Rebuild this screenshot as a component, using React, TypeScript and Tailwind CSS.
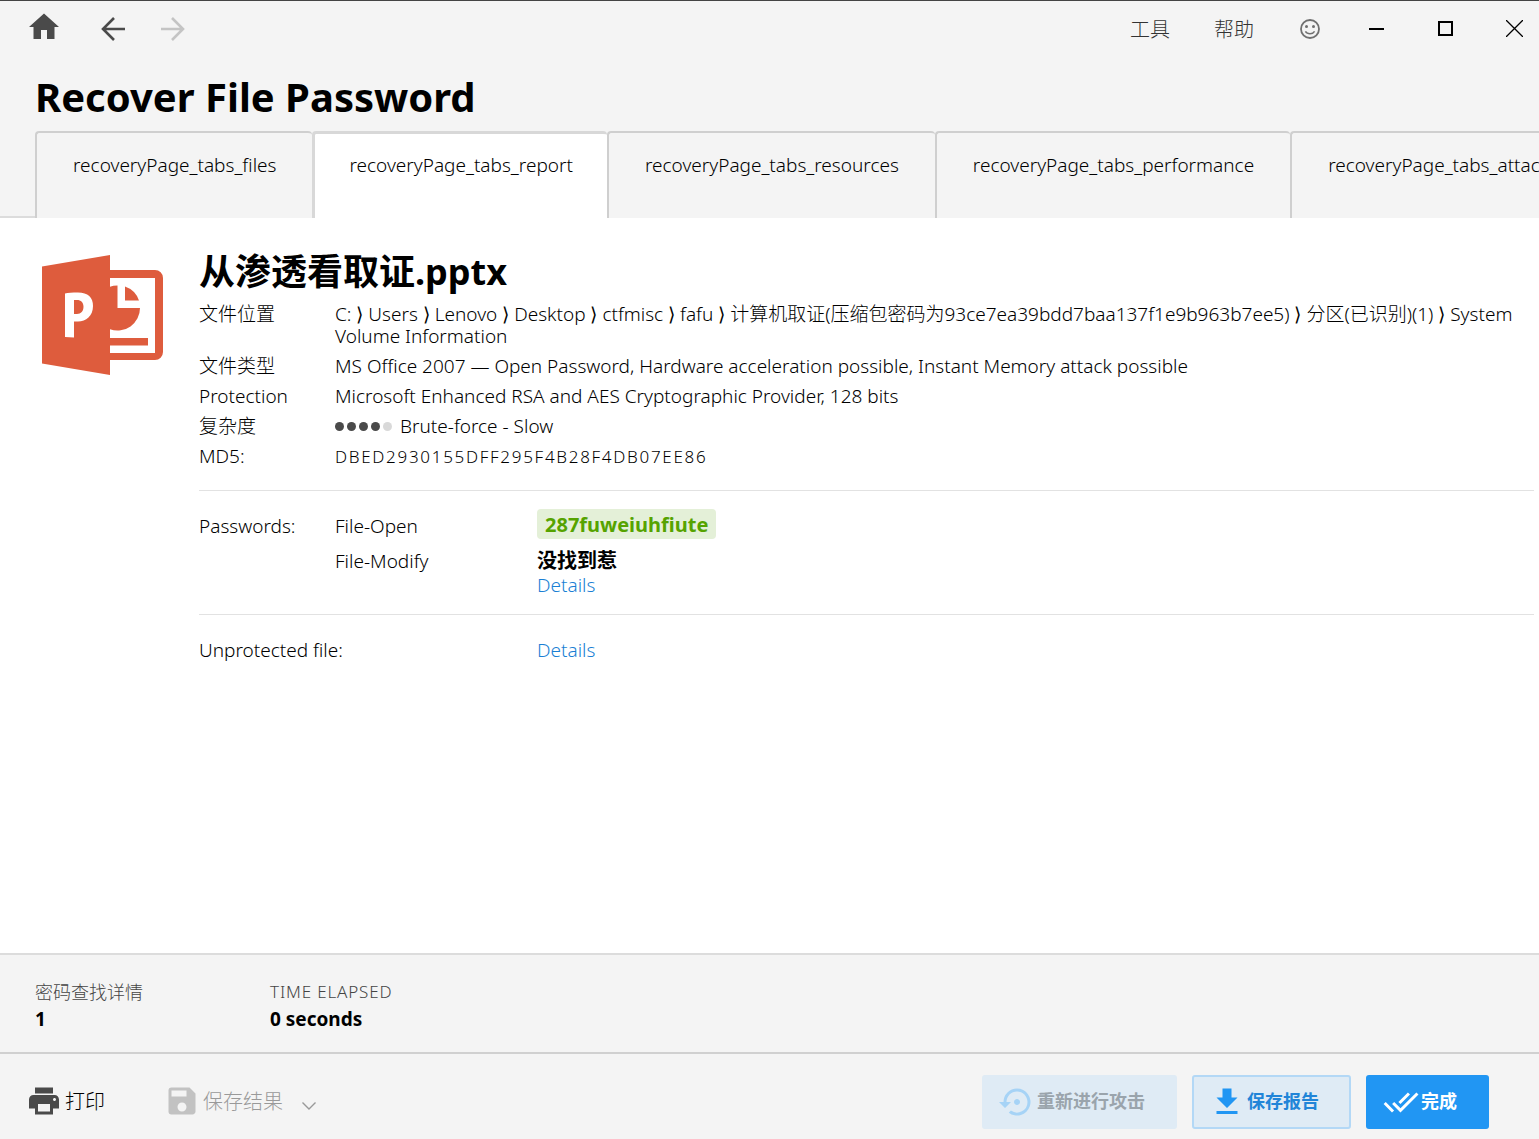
import type { ReactNode } from "react";
import { MdDoneAll, MdHome, MdPrint, MdSave, MdSettingsBackupRestore } from "react-icons/md";

const tabs = [
  { id: "files", label: "recoveryPage_tabs_files" },
  { id: "report", label: "recoveryPage_tabs_report" },
  { id: "resources", label: "recoveryPage_tabs_resources" },
  { id: "performance", label: "recoveryPage_tabs_performance" },
  { id: "attacks", label: "recoveryPage_tabs_attacks" },
];

const activeTab = "report";

const path = [
  "C:",
  "Users",
  "Lenovo",
  "Desktop",
  "ctfmisc",
  "fafu",
  "计算机取证(压缩包密码为93ce7ea39bdd7baa137f1e9b963b7ee5)",
  "分区(已识别)(1)",
  "System Volume Information",
];

function Arrow({ flip }: { flip?: boolean }) {
  return (
    <svg viewBox="0 0 24 24" className={flip ? "size-6 -scale-x-100" : "size-6"} fill="none" stroke="currentColor" strokeWidth="2.6">
      <path d="M24 12H2M13 1L2 12l11 11" />
    </svg>
  );
}

function Smiley() {
  return (
    <svg viewBox="0 0 20 20" className="size-5" fill="none" stroke="currentColor" strokeWidth="1.8">
      <circle cx="10" cy="10" r="9" />
      <circle cx="6.5" cy="7.6" r="1.5" fill="currentColor" stroke="none" />
      <circle cx="13.5" cy="7.6" r="1.5" fill="currentColor" stroke="none" />
      <path d="M5.4 12.4c1.9 3.2 7.3 3.2 9.2 0" strokeWidth="1.5" />
    </svg>
  );
}

function PowerPointIcon() {
  return (
    <svg viewBox="0 0 121 120" className="h-[120px] w-[121px]" fill="#de5c3d">
      <path d="M0 11.500L68 0v120L0 108.500z" />
      <path d="M68 15h45a8 8 0 0 1 8 8v74a8 8 0 0 1-8 8H68v-7h45V23H68z" />
      <path d="M68 31.700q3-1.200 7.500-1.200V53H98a22.500 22.500 0 0 1-30 21.300z" />
      <path d="M83 31.500a22.500 22.500 0 0 1 14 14H83z" />
      <path d="M68 83h38v7.500H68z" />
      <path
        d="M23 38.500c3-.8 7-1 13-1 10 0 15 5 15 13.500 0 10-7 15.500-15 15.500h-4V82.500l-9-.6zM32 45v14h3c4 0 6.500-3 6.500-7.200S39 45 35 45z"
        fill="#fff"
        fillRule="evenodd"
      />
    </svg>
  );
}

function Header() {
  return (
    <header className="bg-[#f4f4f4]">
      <div className="flex h-14 items-center border-t border-[#444] pl-[26px] pr-4 text-[#4a4a4a]">
        <button aria-label="Home"><MdHome className="mb-1 size-9" /></button>
        <button aria-label="Back" className="ml-[39px]"><Arrow /></button>
        <button aria-label="Forward" disabled className="ml-9 text-[#c4c4c4]"><Arrow flip /></button>
        <nav className="ml-auto flex items-center text-[20px] font-light text-[#333]">
          <button className="pt-0.5">工具</button>
          <button className="ml-11 pt-0.5">帮助</button>
          <button aria-label="Feedback" className="ml-[46px] text-[#707070]"><Smiley /></button>
        </nav>
        <button aria-label="Minimize" className="ml-[49px] flex size-4 items-center text-black">
          <span className="h-0.5 w-[15px] bg-black" />
        </button>
        <button aria-label="Maximize" className="ml-[53px] size-[15px] border-2 border-black" />
        <button aria-label="Close" className="ml-[53px] text-black">
          <svg viewBox="0 0 17 17" className="size-[17px]" fill="none" stroke="currentColor" strokeWidth="1.300">
            <path d="M0 0l17 17M17 0L0 17" />
          </svg>
        </button>
      </div>
      <h1 className="pl-[35px] pt-[11px] text-[40px] leading-[60px] font-bold text-black">Recover File Password</h1>
      <div role="tablist" className="mt-1 flex overflow-hidden">
        <div className="w-[35px] shrink-0 border-b-2 border-[#dcdcdc]" />
        {tabs.map((tab) => (
          <button
            key={tab.id}
            role="tab"
            aria-selected={tab.id === activeTab}
            className={`h-[87px] shrink-0 rounded-t ${tab.id === activeTab ? "border-t-3 border-l-3 border-[#d8d8d8] bg-white px-[34px] pb-[21px]" : "border-t-2 border-l-2 border-[#cfcfcf] bg-[#f4f4f4] px-9 pb-5"}`}
          >
            {tab.label}
          </button>
        ))}
      </div>
    </header>
  );
}

function Row({ label, children }: { label: ReactNode; children: ReactNode }) {
  return (
    <div className="flex">
      <dt className="w-[136px] shrink-0">{label}</dt>
      <dd className="min-w-0 flex-1">{children}</dd>
    </div>
  );
}

function Complexity() {
  return (
    <span className="flex gap-[3px]">
      {[1, 2, 3, 4, 5].map((n) => (
        <span key={n} className={`size-[9px] rounded-full ${n < 5 ? "bg-[#4a4a4a]" : "bg-[#d9d9d9]"}`} />
      ))}
    </span>
  );
}

function Report() {
  return (
    <main className="flex flex-1 gap-9 bg-white pl-[42px] pr-[5px] pt-[37px]">
      <div className="shrink-0"><PowerPointIcon /></div>
      <div className="min-w-0 flex-1">
        <h2 className="-mt-[7px] text-[36px] leading-[48px] font-bold text-black">从渗透看取证.pptx</h2>
        <dl className="mt-[7px] flex flex-col gap-2 border-b border-[#e2e2e2] pb-[22px] leading-[22px]">
          <Row label="文件位置">{path.join(" ⟩ ")}</Row>
          <Row label="文件类型">
            MS Office 2007 — Open Password, Hardware acceleration possible, Instant Memory attack possible
          </Row>
          <Row label="Protection">Microsoft Enhanced RSA and AES Cryptographic Provider, 128 bits</Row>
          <Row label="复杂度">
            <span className="flex items-center gap-2"><Complexity />Brute-force - Slow</span>
          </Row>
          <Row label="MD5:"><span className="text-[17px] tracking-widest">DBED2930155DFF295F4B28F4DB07EE86</span></Row>
        </dl>
        <section className="grid grid-cols-[136px_202px_1fr] border-b border-[#e2e2e2] pt-[18px] pb-[17px] leading-6">
          <span className="leading-[34px]">Passwords:</span>
          <span className="leading-[34px]">File-Open</span>
          <span>
            <strong className="inline-block rounded bg-[#e4f0d8] px-2 pt-0.5 text-[20px] leading-7 font-bold text-[#56a300]">287fuweiuhfiute</strong>
          </span>
          <span className="col-start-2 mt-1.5">File-Modify</span>
          <span className="mt-1.5 flex flex-col items-start">
            <strong className="text-[20px] font-bold text-black">没找到惹</strong>
            <a href="#modify" className="text-[#1a7fd4]">Details</a>
          </span>
        </section>
        <section className="grid grid-cols-[338px_1fr] pt-[23px] leading-6">
          <span>Unprotected file:</span>
          <a href="#unprotected" className="text-[#1a7fd4]">Details</a>
        </section>
      </div>
    </main>
  );
}

function Footer() {
  return (
    <footer className="bg-[#f4f4f4]">
      <dl className="flex h-[99px] border-t-2 border-[#dcdcdc] pl-[35px] pt-6">
        <div className="w-[235px]">
          <dt className="text-[18px] leading-[26px] text-[#444]">密码查找详情</dt>
          <dd className="leading-7 font-bold text-black">1</dd>
        </div>
        <div>
          <dt className="text-[17px] leading-[26px] tracking-wider text-[#444]">TIME ELAPSED</dt>
          <dd className="leading-7 font-bold text-black">0 seconds</dd>
        </div>
      </dl>
      <div className="flex h-[87px] items-center border-t-2 border-[#d0d0d0] pl-[26px] pr-[50px] pt-2.5">
        <button className="flex items-center gap-[3px] text-[20px] text-black">
          <MdPrint className="mb-0.5 size-9 text-[#4a4a4a]" />
          打印
        </button>
        <button disabled className="ml-[59px] flex items-center gap-[3px] text-[20px] text-[#999]">
          <MdSave className="mb-0.5 size-9 text-[#c2c2c2]" />
          保存结果
          <svg viewBox="0 0 14 8" className="ml-4 mt-2 h-2 w-3.5" fill="none" stroke="currentColor" strokeWidth="1.400">
            <path d="M.5.5L7 7 13.500.5" />
          </svg>
        </button>
        <div className="ml-auto flex gap-[15px] text-[18px] font-bold">
          <button disabled className="flex h-[54px] items-center gap-0.5 rounded-[3px] bg-[#dfebf5] pl-[17px] pr-8 text-[#9aa4ac]">
            <MdSettingsBackupRestore className="size-9 text-[#a6d3f6]" />
            重新进行攻击
          </button>
          <button className="flex h-[54px] items-center gap-0.5 rounded-[3px] border-2 border-[#b3d8f6] bg-[#dfebf5] pl-[15px] pr-[30px] text-[#2185d8]">
            <svg viewBox="0 0 24 24" className="size-9" fill="#2196f3">
              <path d="M19 9h-4V3H9v6H5l7 7zM5 18v2h14v-2z" />
            </svg>
            保存报告
          </button>
          <button className="flex h-[54px] items-center gap-0.5 rounded-[3px] bg-[#2196f3] pl-[17px] pr-8 text-white">
            <MdDoneAll className="size-9" />
            完成
          </button>
        </div>
      </div>
    </footer>
  );
}

export default function App() {
  return (
    <div
      lang="zh-CN"
      className="flex min-h-screen flex-col font-['Noto_Sans','Noto_Sans_CJK_SC',sans-serif] text-[19px] font-light text-black"
    >
      <Header />
      <Report />
      <Footer />
    </div>
  );
}
